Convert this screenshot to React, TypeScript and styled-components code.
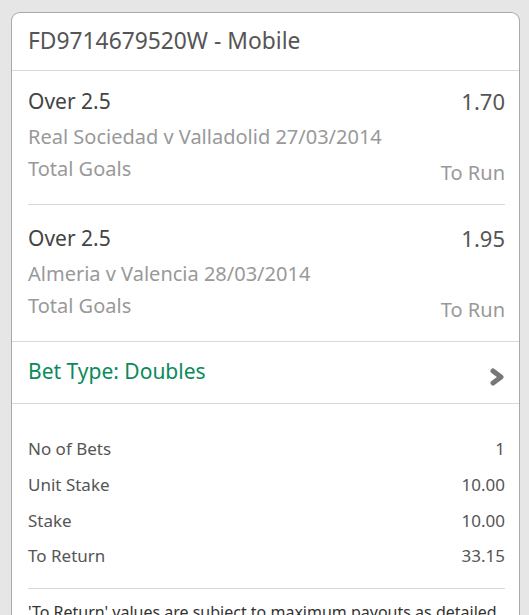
import React from 'react';
import styled, { createGlobalStyle } from 'styled-components';

const GlobalStyle = createGlobalStyle`
    html, body {
        margin: 0;
        padding: 0;
        background: #e6e6e6;
        font-family: "Noto Sans", "Open Sans", sans-serif;
    }
`;

const Page = styled.div`
    padding: 12px 9px 0 11px;
    height: 615px;
    overflow: hidden;
    box-sizing: border-box;
`;

const Card = styled.div`
    background: #ffffff;
    border: 1px solid #a9a9a9;
    border-bottom: none;
    border-radius: 9px 9px 0 0;
    overflow: hidden;
`;

const Header = styled.div`
    height: 58px;
    box-sizing: border-box;
    display: flex;
    align-items: center;
    padding: 0 16px 3px;
    font-size: 22.8px;
    color: #555555;
    border-bottom: 1px solid #d8d8d8;
`;

const Selections = styled.div`
    padding: 0 14px 0 16px;
    border-bottom: 1px solid #d8d8d8;
`;

const Selection = styled.div`
    padding: 17px 0 15px;
    border-bottom: 1px solid #d8d8d8;

    &:first-child {
        padding-top: 14px;
    }
    &:last-child {
        border-bottom: none;
    }
`;

const Row = styled.div<{ $bottom?: boolean }>`
    display: flex;
    justify-content: space-between;
    align-items: ${p => (p.$bottom ? 'flex-end' : 'center')};
`;

const Pick = styled.span`
    font-size: 21px;
    line-height: 32px;
    color: #444444;
`;

const Odds = styled.span`
    font-size: 22px;
    line-height: 32px;
    color: #555555;
`;

const SubText = styled.div<{ $pad?: number }>`
    font-size: 20px;
    line-height: 32px;
    color: #999999;
    padding-bottom: ${p => p.$pad || 0}px;
`;

const EventLine = styled(SubText)`
    margin-top: 4px;
`;

const BetType = styled.div`
    height: 62px;
    box-sizing: border-box;
    display: flex;
    align-items: center;
    justify-content: space-between;
    padding: 0 14px 3px 16px;
    font-size: 21px;
    color: #0a8a5c;
    border-bottom: 1px solid #d8d8d8;
`;

const Chevron = styled.svg`
    margin-top: 11px;
`;

const Summary = styled.div`
    padding: 27px 14px 0 16px;
`;

const SummaryList = styled.div`
    padding-bottom: 14px;
    border-bottom: 1px solid #d8d8d8;
`;

const SummaryRow = styled.div`
    display: flex;
    justify-content: space-between;
    height: 35.7px;
    align-items: center;
    font-size: 17px;
    color: #555555;
`;

const Disclaimer = styled.p`
    margin: 0;
    padding-top: 10px;
    font-size: 16px;
    line-height: 26px;
    color: #333333;
`;

const selections = [
    { pick: 'Over 2.5', odds: '1.70', event: 'Real Sociedad v Valladolid 27/03/2014', market: 'Total Goals', status: 'To Run' },
    { pick: 'Over 2.5', odds: '1.95', event: 'Almeria v Valencia 28/03/2014', market: 'Total Goals', status: 'To Run' },
];

const summary = [
    { label: 'No of Bets', value: '1' },
    { label: 'Unit Stake', value: '10.00' },
    { label: 'Stake', value: '10.00' },
    { label: 'To Return', value: '33.15' },
];

export default function App() {
    return (
        <Page>
            <GlobalStyle />
            <Card>
                <Header>FD9714679520W - Mobile</Header>
                <Selections>
                    {selections.map((s, i) => (
                        <Selection key={i}>
                            <Row>
                                <Pick>{s.pick}</Pick>
                                <Odds>{s.odds}</Odds>
                            </Row>
                            <EventLine>{s.event}</EventLine>
                            <Row $bottom>
                                <SubText $pad={4}>{s.market}</SubText>
                                <SubText>{s.status}</SubText>
                            </Row>
                        </Selection>
                    ))}
                </Selections>
                <BetType>
                    <span>Bet Type: Doubles</span>
                    <Chevron width="16" height="18" viewBox="0 0 16 18">
                        <polyline points="4,3 12,9 4,15" fill="none" stroke="#777777" strokeWidth="5" strokeLinejoin="round" strokeLinecap="round" />
                    </Chevron>
                </BetType>
                <Summary>
                    <SummaryList>
                        {summary.map(r => (
                            <SummaryRow key={r.label}>
                                <span>{r.label}</span>
                                <span>{r.value}</span>
                            </SummaryRow>
                        ))}
                    </SummaryList>
                    <Disclaimer>'To Return' values are subject to maximum payouts as detailed in our rules.</Disclaimer>
                </Summary>
            </Card>
        </Page>
    );
}
